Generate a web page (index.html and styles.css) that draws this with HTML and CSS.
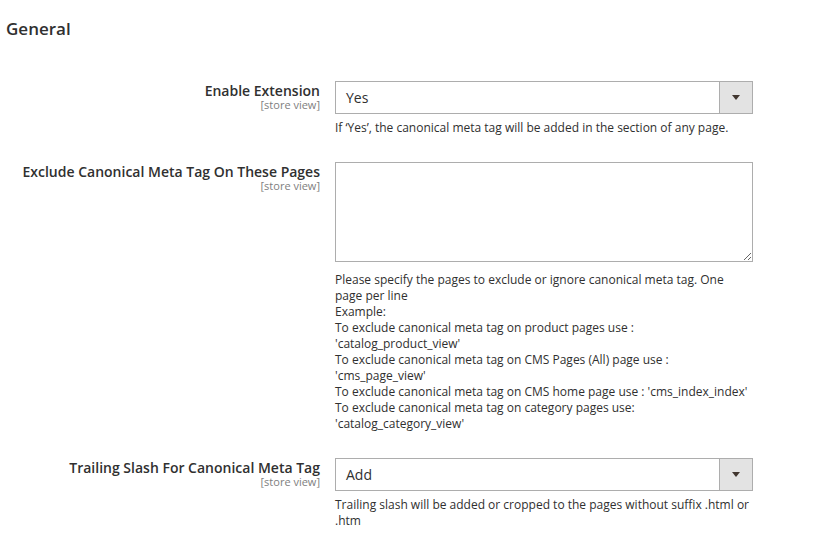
FILE: index.html
```html
<!DOCTYPE html>
<html>
<head>
<meta charset="utf-8">
<link rel="stylesheet" href="styles.css">
</head>
<body>
<div class="page">
  <h2 class="section-title">General</h2>
  <div class="fields">
    <div class="row">
      <div class="label">
        <span class="label-text">Enable Extension</span>
        <span class="scope">[store view]</span>
      </div>
      <div class="control">
        <div class="select">
          <span class="select-value">Yes</span>
          <span class="select-arrow"><span class="tri"></span></span>
        </div>
        <div class="note">If ‘Yes’, the canonical meta tag will be added in the section of any page.</div>
      </div>
    </div>
    <div class="row">
      <div class="label">
        <span class="label-text">Exclude Canonical Meta Tag On These Pages</span>
        <span class="scope">[store view]</span>
      </div>
      <div class="control">
        <textarea class="textarea"></textarea>
        <div class="note note-after-textarea">Please specify the pages to exclude or ignore canonical meta tag. One page per line<br>Example:<br>To exclude canonical meta tag on product pages use : 'catalog_product_view'<br>To exclude canonical meta tag on CMS Pages (All) page use : 'cms_page_view'<br>To exclude canonical meta tag on CMS home page use : 'cms_index_index'<br>To exclude canonical meta tag on category pages use: 'catalog_category_view'</div>
      </div>
    </div>
    <div class="row">
      <div class="label">
        <span class="label-text">Trailing Slash For Canonical Meta Tag</span>
        <span class="scope">[store view]</span>
      </div>
      <div class="control">
        <div class="select">
          <span class="select-value">Add</span>
          <span class="select-arrow"><span class="tri"></span></span>
        </div>
        <div class="note">Trailing slash will be added or cropped to the pages without suffix .html or .htm</div>
      </div>
    </div>
  </div>
</div>
</body>
</html>
```
FILE: styles.css
```css
html, body {
  margin: 0;
  padding: 0;
  background: #ffffff;
}
body {
  font-family: "Open Sans", "Liberation Sans", sans-serif;
  color: #303030;
  overflow: hidden;
}
.page {
  padding: 17px 0 0 6px;
}
.section-title {
  margin: 0;
  font-size: 17px;
  font-weight: 600;
  line-height: 23px;
  color: #303030;
}
.fields {
  padding-top: 41px;
  display: flex;
  flex-direction: column;
  gap: 26px;
}
.row {
  display: flex;
  gap: 15px;
}
.label {
  width: 314px;
  display: flex;
  flex-direction: column;
  align-items: flex-end;
  text-align: right;
  padding-top: 1px;
}
.label-text {
  display: block;
  font-size: 14px;
  font-weight: 600;
  line-height: 17px;
  color: #303030;
}
.scope {
  display: block;
  font-size: 11px;
  line-height: 12px;
  color: #808080;
}
.control {
  width: 418px;
}
.select {
  height: 33px;
  box-sizing: border-box;
  border: 1px solid #adadad;
  display: flex;
  align-items: stretch;
  background: #fff;
}
.select-value {
  flex: 1;
  font-size: 14px;
  line-height: 31px;
  padding-left: 10px;
  color: #303030;
}
.select-arrow {
  width: 32px;
  background: #e3e3e3;
  border-left: 1px solid #adadad;
  display: flex;
  align-items: center;
  justify-content: center;
}
.tri {
  width: 0;
  height: 0;
  border-left: 4px solid transparent;
  border-right: 4px solid transparent;
  border-top: 5px solid #41362f;
}
.textarea {
  display: block;
  width: 418px;
  height: 100px;
  box-sizing: border-box;
  border: 1px solid #adadad;
  border-radius: 0;
  margin: 0;
  padding: 8px 10px;
  font-family: inherit;
  font-size: 14px;
  resize: vertical;
  outline: none;
}
.note {
  margin-top: 6px;
  font-size: 12px;
  line-height: 16px;
  color: #303030;
}
.note-after-textarea {
  margin-top: 10px;
}
```
